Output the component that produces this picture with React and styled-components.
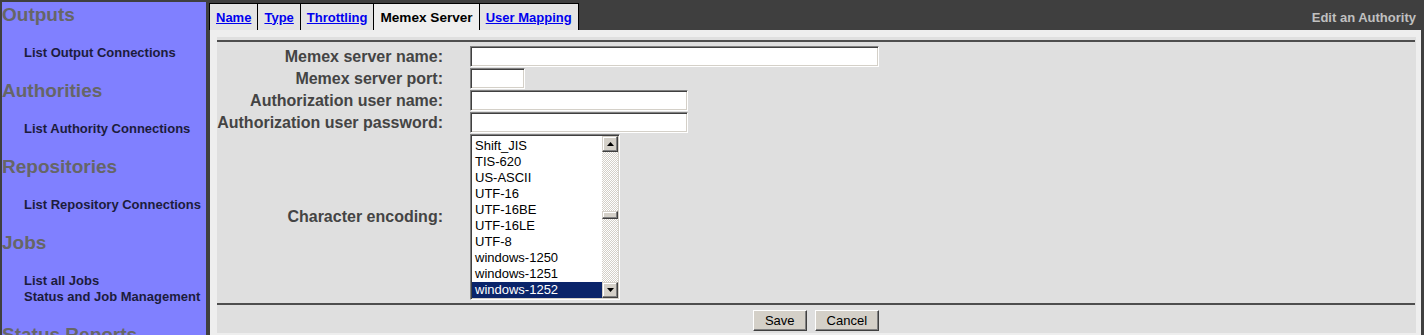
import React from 'react';
import styled, { createGlobalStyle } from 'styled-components';

const GlobalStyle = createGlobalStyle`
  html, body {
    margin: 0;
    padding: 0;
    overflow: hidden;
    background: #3f3f3f;
  }
  body {
    font-family: "Liberation Sans", Arial, Helvetica, sans-serif;
  }
`;

const Page = styled.div`
  display: flex;
  align-items: stretch;
  gap: 4px;
  padding: 2px 3px 0 2px;
  min-height: 335px;
  box-sizing: border-box;
`;

const Sidebar = styled.nav`
  width: 204px;
  flex-shrink: 0;
  background: #8080ff;
  padding-top: 1px;
  overflow: hidden;
`;

const NavSection = styled.div`
  padding-bottom: 18px;
`;

const NavHeading = styled.div`
  font-size: 19px;
  font-weight: bold;
  color: #666666;
  line-height: 24px;
  margin-bottom: 18px;
  white-space: nowrap;
`;

const NavLink = styled.a`
  display: block;
  padding-left: 22px;
  font-size: 13px;
  font-weight: bold;
  line-height: 16px;
  color: #1c1c3c;
  text-decoration: none;
  white-space: nowrap;
`;

const Main = styled.div`
  flex: 1;
  min-width: 0;
  display: flex;
  flex-direction: column;
`;

const Header = styled.div`
  height: 28px;
  display: flex;
  align-items: flex-end;
  justify-content: space-between;
`;

const Tabs = styled.div`
  display: flex;
  align-items: flex-end;
  margin-left: -1px;
`;

const Tab = styled.div`
  height: 27px;
  box-sizing: border-box;
  display: flex;
  align-items: center;
  padding: 0 6px;
  margin-left: -1px;
  border: 1px solid #000;
  border-bottom: none;
  background: ${p => (p.$active ? '#efefef' : '#e4e4e4')};
  font-size: ${p => (p.$active ? '13.6px' : '13px')};
  font-weight: bold;
  color: #000;

  &:first-child {
    margin-left: 0;
  }
`;

const TabLink = styled.a`
  color: #0000ee;
  text-decoration: underline;
`;

const PageTitle = styled.div`
  align-self: center;
  padding: 2px 5px 0 0;
  font-size: 13px;
  font-weight: bold;
  color: #c0c0c0;
`;

const Panel = styled.div`
  flex: 1;
  background: #eeeeee;
  padding: 7px 5px 0 7px;
`;

const FormBox = styled.div`
  background: #dfdfdf;
  padding: 3px 1px 2px 0;
`;

const Rule = styled.div`
  height: 2px;
  background: #4e4e4e;
  margin-top: ${p => p.$top || 0}px;
`;

const FormGrid = styled.div`
  display: grid;
  grid-template-columns: 226px auto;
  column-gap: 27px;
  row-gap: 1px;
  align-items: center;
  justify-items: start;
  margin-top: 4px;
`;

const Label = styled.div`
  justify-self: end;
  text-align: right;
  white-space: nowrap;
  font-size: 16px;
  font-weight: bold;
  color: #444444;
`;

const sunken = `
  border-top: 1px solid #808080;
  border-left: 1px solid #808080;
  border-right: 1px solid #ffffff;
  border-bottom: 1px solid #ffffff;
  box-shadow: inset 1px 1px 0 #404040, inset -1px -1px 0 #d4d0c8;
`;

const raised = `
  border-top: 1px solid #ffffff;
  border-left: 1px solid #ffffff;
  border-right: 1px solid #404040;
  border-bottom: 1px solid #404040;
  box-shadow: inset -1px -1px 0 #808080, inset 1px 1px 0 #d4d0c8;
`;

const TextInput = styled.input`
  width: ${p => p.$w}px;
  height: 21px;
  box-sizing: border-box;
  margin: 0;
  padding: 0 3px;
  background: #ffffff;
  font: 13px "Liberation Sans", Arial, sans-serif;
  outline: none;
  ${sunken}
`;

const ListBox = styled.div`
  width: 150px;
  height: 166px;
  box-sizing: border-box;
  padding: 1px;
  background: #ffffff;
  display: flex;
  ${sunken}
`;

const Options = styled.div`
  flex: 1;
  padding-top: 2px;
  overflow: hidden;
`;

const Option = styled.div`
  height: 16px;
  line-height: 16px;
  padding-left: 3px;
  font-size: 13px;
  white-space: nowrap;
  color: ${p => (p.$selected ? '#ffffff' : '#000000')};
  background: ${p => (p.$selected ? '#0a246a' : 'transparent')};
`;

const Scrollbar = styled.div`
  width: 16px;
  display: flex;
  flex-direction: column;
`;

const ScrollButton = styled.div`
  width: 16px;
  height: 16px;
  box-sizing: border-box;
  background: #d4d0c8;
  display: flex;
  align-items: center;
  justify-content: center;
  ${raised}
  border-top-color: #d4d0c8;
  border-left-color: #d4d0c8;
  box-shadow: inset -1px -1px 0 #808080, inset 1px 1px 0 #ffffff;
`;

const Track = styled.div`
  flex: 1;
  background-color: #ffffff;
  background-image: conic-gradient(#d4d0c8 25%, #ffffff 0 50%, #d4d0c8 0 75%, #ffffff 0);
  background-size: 2px 2px;
`;

const Thumb = styled.div`
  height: 8px;
  box-sizing: border-box;
  background: #d4d0c8;
  border-top: 1px solid #d4d0c8;
  border-left: 1px solid #d4d0c8;
  border-right: 1px solid #404040;
  border-bottom: 1px solid #404040;
  box-shadow: inset -1px -1px 0 #808080, inset 1px 1px 0 #ffffff;
`;

const ButtonRow = styled.div`
  display: flex;
  justify-content: center;
  gap: 8px;
  margin-top: 5px;
`;

const Button = styled.button`
  height: 21px;
  margin: 0;
  padding: 0 11px;
  background: #d4d0c8;
  color: #000;
  font: 13px "Liberation Sans", Arial, sans-serif;
  ${raised}
`;

const Arrow = ({ down }) => (
  <svg width="7" height="4" viewBox="0 0 7 4">
    <path d={down ? 'M0 0H7L3.5 4Z' : 'M3.5 0L7 4H0Z'} fill="#000" />
  </svg>
);

const nav = [
  { title: 'Outputs', links: ['List Output Connections'] },
  { title: 'Authorities', links: ['List Authority Connections'] },
  { title: 'Repositories', links: ['List Repository Connections'] },
  { title: 'Jobs', links: ['List all Jobs', 'Status and Job Management'] },
  { title: 'Status Reports', links: ['Document Status', 'Queue Status'] },
  { title: 'History Reports', links: ['Simple History', 'Maximum Activity'] },
];

const tabs = ['Name', 'Type', 'Throttling', 'Memex Server', 'User Mapping'];

const encodings = [
  'Shift_JIS', 'TIS-620', 'US-ASCII', 'UTF-16', 'UTF-16BE', 'UTF-16LE',
  'UTF-8', 'windows-1250', 'windows-1251', 'windows-1252',
];

const scrollFraction = 0.45;
const trackSpace = 130 - 8;

export default function App() {
  return (
    <>
      <GlobalStyle />
      <Page>
        <Sidebar>
          {nav.map(section => (
            <NavSection key={section.title}>
              <NavHeading>{section.title}</NavHeading>
              {section.links.map(l => (
                <NavLink key={l} href="#">{l}</NavLink>
              ))}
            </NavSection>
          ))}
        </Sidebar>

        <Main>
          <Header>
            <Tabs>
              {tabs.map(t => (
                <Tab key={t} $active={t === 'Memex Server'}>
                  {t === 'Memex Server' ? t : <TabLink href="#">{t}</TabLink>}
                </Tab>
              ))}
            </Tabs>
            <PageTitle>Edit an Authority</PageTitle>
          </Header>

          <Panel>
            <FormBox>
              <Rule />
              <FormGrid>
                <Label>Memex server name:</Label>
                <TextInput $w={409} />
                <Label>Memex server port:</Label>
                <TextInput $w={55} />
                <Label>Authorization user name:</Label>
                <TextInput $w={218} />
                <Label>Authorization user password:</Label>
                <TextInput $w={218} type="password" />
                <Label>Character encoding:</Label>
                <ListBox>
                  <Options>
                    {encodings.map(e => (
                      <Option key={e} $selected={e === 'windows-1252'}>{e}</Option>
                    ))}
                  </Options>
                  <Scrollbar>
                    <ScrollButton><Arrow /></ScrollButton>
                    <Track>
                      <Thumb style={{ marginTop: Math.round(trackSpace * scrollFraction) + 4 }} />
                    </Track>
                    <ScrollButton><Arrow down /></ScrollButton>
                  </Scrollbar>
                </ListBox>
              </FormGrid>
              <Rule $top={3} />
              <ButtonRow>
                <Button>Save</Button>
                <Button>Cancel</Button>
              </ButtonRow>
            </FormBox>
          </Panel>
        </Main>
      </Page>
    </>
  );
}
